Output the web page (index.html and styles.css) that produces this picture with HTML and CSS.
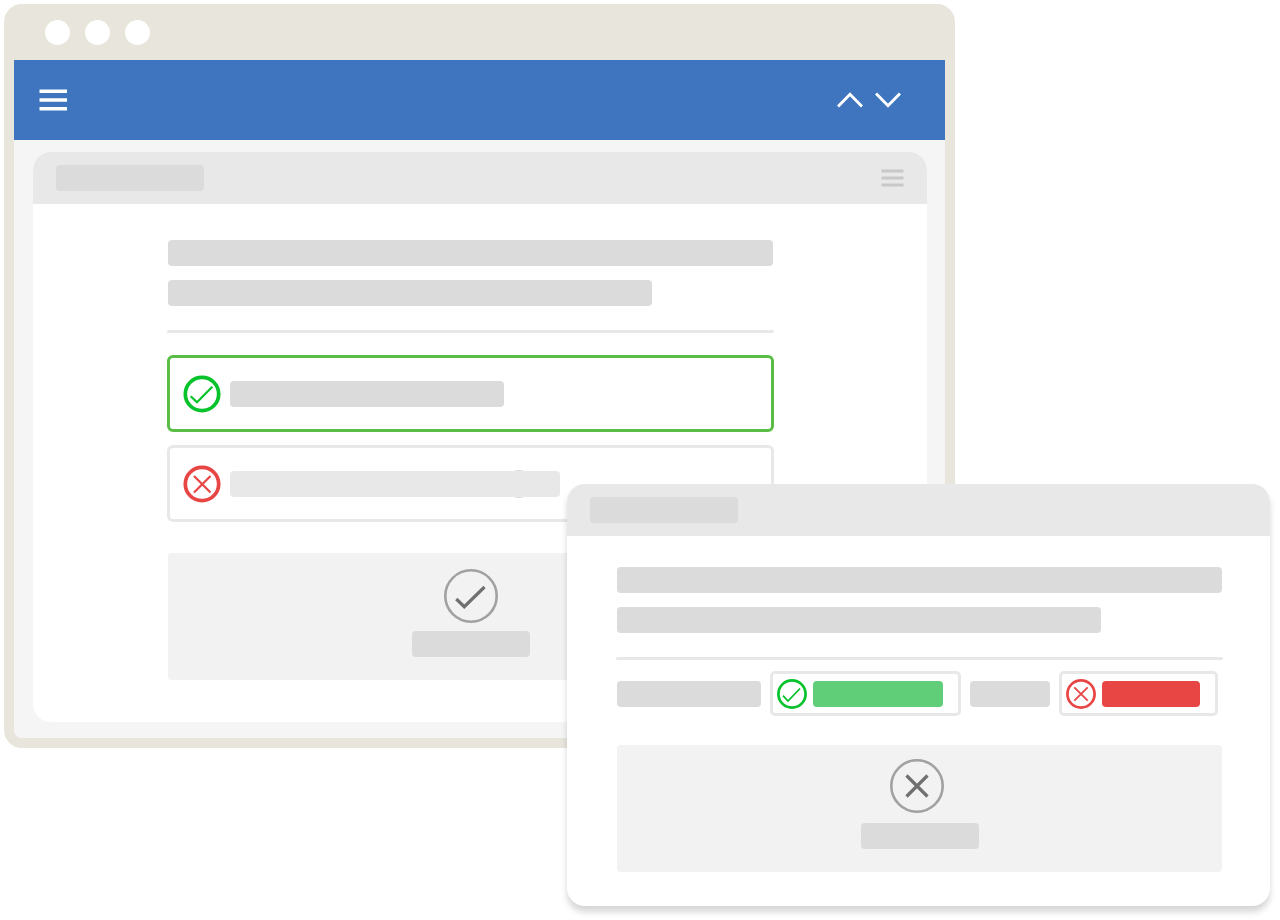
FILE: index.html
```html
<!DOCTYPE html>
<html lang="en">
<head>
<meta charset="utf-8">
<meta name="viewport" content="width=device-width, initial-scale=1">
<title>Quiz feedback</title>
<link rel="stylesheet" href="styles.css">
</head>
<body>
<main class="stage">
  <section class="window">
    <div class="window-top">
      <span class="dot"></span><span class="dot"></span><span class="dot"></span>
    </div>
    <header class="toolbar">
      <button class="icon-button" type="button" aria-label="Menu">
        <svg width="28" height="22" viewBox="0 0 28 22" fill="#fff"><path d="M.5.5H28V4H.5zM.5 9.300H28V12.800H.5zM.5 18H28V21.500H.5z"/></svg>
      </button>
      <nav class="pager">
        <button class="icon-button" type="button" aria-label="Previous">
          <svg width="26" height="16" viewBox="0 0 26 16" fill="none" stroke="#fff" stroke-width="3"><path d="M1 14.500 13 2.300 25 14.500"/></svg>
        </button>
        <button class="icon-button" type="button" aria-label="Next">
          <svg width="26" height="16" viewBox="0 0 26 16" fill="none" stroke="#fff" stroke-width="3"><path d="M1 1.500 13 13.700 25 1.500"/></svg>
        </button>
      </nav>
    </header>
    <div class="workspace">
      <article class="card">
        <header class="card-head">
          <span class="bar bar-title"></span>
          <button class="icon-button" type="button" aria-label="Question menu">
            <svg width="23" height="18" viewBox="0 0 23 18" fill="none" stroke="#c8c8c8" stroke-width="3"><path d="M.5 2H22.500M.5 9H22.500M.5 16H22.500"/></svg>
          </button>
        </header>
        <div class="card-body">
          <div class="question">
            <span class="bar"></span>
            <span class="bar bar-short"></span>
          </div>
          <hr class="rule">
          <div class="options">
            <div class="option option-right">
              <svg width="38" height="38" viewBox="0 0 38 38" fill="none" stroke="#06c22b"><circle cx="19" cy="19" r="16.700" stroke-width="3.700"/><path d="M7.700 21.300 14 27.300 29.300 11.800" stroke-width="2.200"/></svg>
              <span class="bar bar-answer"></span>
            </div>
            <div class="option">
              <svg width="38" height="38" viewBox="0 0 38 38" fill="none" stroke="#e84545"><circle cx="19" cy="19" r="16.700" stroke-width="3.700"/><path d="M11 11 27.500 27.500M27.500 11 11 27.500" stroke-width="2.200"/></svg>
              <span class="bar bar-wrong"></span>
            </div>
          </div>
          <div class="feedback">
            <svg width="54" height="54" viewBox="0 0 54 54" fill="none"><circle cx="27" cy="27" r="25.700" stroke="#a1a1a1" stroke-width="2.600"/><path d="M12.300 30 20.300 37.700 40.500 18" stroke="#707070" stroke-width="3.200"/></svg>
            <span class="bar bar-result"></span>
          </div>
        </div>
      </article>
    </div>
  </section>

  <article class="card card-front">
    <header class="card-head">
      <span class="bar bar-title"></span>
    </header>
    <div class="card-body">
      <div class="question">
        <span class="bar"></span>
        <span class="bar bar-short"></span>
      </div>
      <hr class="rule">
      <div class="sentence">
        <span class="bar word-long"></span>
        <span class="blank blank-long">
          <svg width="30" height="30" viewBox="0 0 30 30" fill="none" stroke="#06c22b"><circle cx="15" cy="15" r="13.600" stroke-width="2.700"/><path d="M6 16.700 11 22 23 9.500" stroke-width="1.800"/></svg>
          <span class="bar fill-right"></span>
        </span>
        <span class="bar word-short"></span>
        <span class="blank blank-short">
          <svg width="30" height="30" viewBox="0 0 30 30" fill="none" stroke="#e84545"><circle cx="15" cy="15" r="13.600" stroke-width="2.700"/><path d="M8.300 8.300 21.700 21.700M21.700 8.300 8.300 21.700" stroke-width="1.800"/></svg>
          <span class="bar fill-wrong"></span>
        </span>
      </div>
      <div class="feedback">
        <svg width="60" height="54" viewBox="0 0 60 54" fill="none"><circle cx="27" cy="27" r="25.700" stroke="#a1a1a1" stroke-width="2.600"/><path d="M16.500 16.500 37.500 37.500M37.500 16.500 16.500 37.500" stroke="#707070" stroke-width="3.200"/></svg>
        <span class="bar bar-result"></span>
      </div>
    </div>
  </article>
</main>
</body>
</html>
```
FILE: styles.css
```css
* { box-sizing: border-box; }

body {
  margin: 0;
  background: #fff;
  font-family: "Liberation Sans", Arial, sans-serif;
}

svg { display: block; flex: none; }

.stage {
  position: relative;
  padding: 4px 325px 0 4px;
  min-height: 100vh;
}

.window {
  padding: 0 10px 10px;
  border-radius: 18px;
  background: #e7e5dc;
}

.window-top {
  display: flex;
  align-items: center;
  gap: 15px;
  height: 56px;
  padding-left: 31px;
}

.dot {
  width: 25px;
  height: 25px;
  border-radius: 50%;
  background: #fff;
}

.toolbar {
  display: flex;
  align-items: center;
  justify-content: space-between;
  height: 80px;
  padding: 0 44px 0 25px;
  background: #3f74bf;
}

.pager { display: flex; gap: 12px; }

.icon-button {
  padding: 0;
  border: 0;
  background: none;
  cursor: pointer;
}

.workspace {
  padding: 12px 18px 16px 19px;
  border-radius: 0 0 8px 8px;
  background: #f5f5f5;
}

.card {
  border-radius: 18px;
  background: #fff;
}

.card-head {
  display: flex;
  align-items: center;
  justify-content: space-between;
  height: 52px;
  padding: 0 23px;
  border-radius: 18px 18px 0 0;
  background: #e8e8e8;
}

.card-body { padding: 36px 153px 42px 134px; }

.bar {
  display: block;
  height: 26px;
  border-radius: 4px;
  background: #dbdbdb;
}

.bar-title { width: 148px; }
.bar-short { width: 80%; }
.bar-answer { width: 274px; }
.bar-result { width: 118px; }

.question {
  display: grid;
  gap: 14px;
  margin: 0 1px;
}

.rule {
  height: 3px;
  margin: 24px 0 22px;
  border: 0;
  border-radius: 2px;
  background: #e8e8e8;
}

.options { display: grid; gap: 13px; }

.option {
  display: flex;
  align-items: center;
  gap: 9px;
  height: 77px;
  padding-left: 13px;
  border: 3px solid #e8e8e8;
  border-radius: 6px;
}

.option-right { border-color: #5abd45; }

.bar-wrong {
  position: relative;
  z-index: 0;
  width: 330px;
  background: none;
}

.bar-wrong::before,
.bar-wrong::after {
  content: "";
  position: absolute;
}

.bar-wrong::before {
  top: -1px;
  left: 275px;
  width: 28px;
  height: 28px;
  border-radius: 50%;
  background: #dbdbdb;
}

.bar-wrong::after {
  inset: 0;
  border-radius: 4px;
  background: #e8e8e8;
}

.feedback {
  display: flex;
  flex-direction: column;
  align-items: center;
  gap: 8px;
  margin: 31px 1px 0;
  padding: 16px 0 23px;
  border-radius: 4px;
  background: #f2f2f2;
}

.card-front {
  position: absolute;
  top: 484px;
  right: 10px;
  left: 567px;
  box-shadow: 0 6px 6px rgba(0, 0, 0, 0.16);
}

.card-front .card-body { padding: 31px 47px 34px 49px; }
.card-front .rule { margin-bottom: 11px; }

.card-front .feedback {
  gap: 10px;
  margin-top: 29px;
  padding: 14px 0 23px;
}

.sentence {
  display: flex;
  align-items: center;
  gap: 9px;
  margin: 0 1px;
}

.word-long { width: 144px; }
.word-short { width: 80px; }

.blank {
  display: flex;
  align-items: center;
  gap: 6px;
  height: 45px;
  padding-left: 4px;
  border: 3px solid #e8e8e8;
  border-radius: 5px;
}

.blank-long { width: 191px; }
.blank-short { width: 159px; }
.fill-right { width: 130px; background: #60cd78; }
.fill-wrong { width: 98px; background: #e84545; }
```
